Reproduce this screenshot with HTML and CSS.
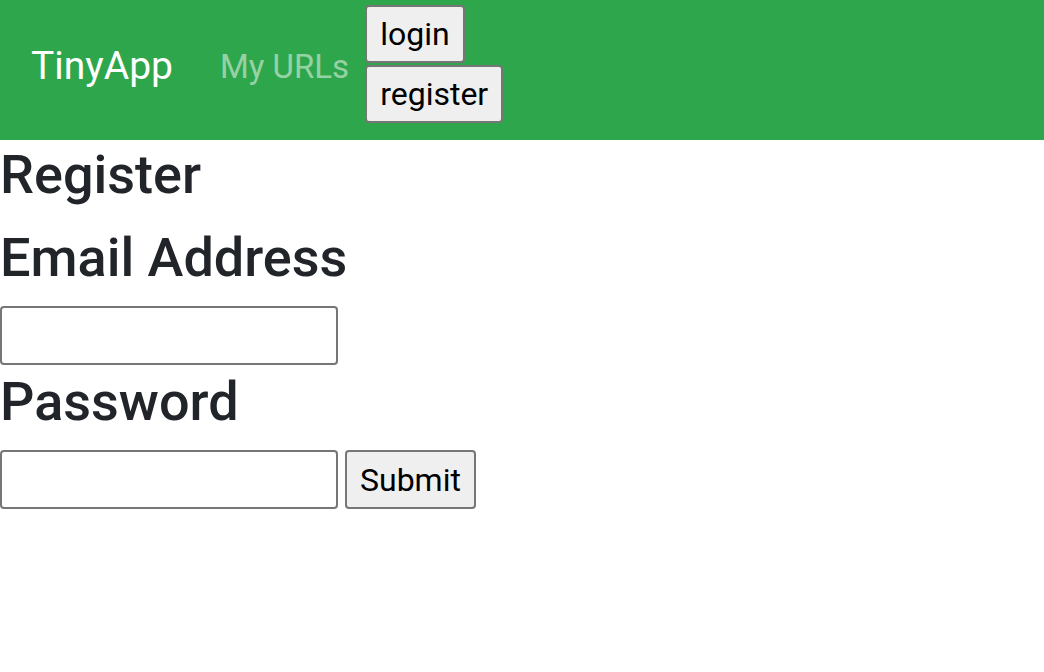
FILE: index.html
```html
<!DOCTYPE html>
<html>
<head>
<meta charset="utf-8">
<title>TinyApp</title>
<link rel="stylesheet" href="styles.css">
</head>
<body>
<nav class="navbar">
  <a class="brand" href="#">TinyApp</a>
  <a class="nav-link" href="#">My URLs</a>
  <div class="auth">
    <button class="btn" type="button">login</button>
    <button class="btn" type="button">register</button>
  </div>
</nav>
<main class="content">
  <h4 class="title">Register</h4>
  <form class="form">
    <h3 class="label label-email">Email Address</h3>
    <input class="field" type="text">
    <h3 class="label label-pw">Password</h3>
    <div class="row">
      <input class="field" type="password">
      <button class="btn submit" type="submit">Submit</button>
    </div>
  </form>
</main>
</body>
</html>
```
FILE: styles.css
```css
html, body {
  margin: 0;
  padding: 0;
  background: #fff;
}
body {
  font-family: Roboto, Inter, "Liberation Sans", sans-serif;
  color: #212529;
}
.navbar {
  height: 140px;
  background: #2ea64b;
  display: flex;
  align-items: flex-start;
  padding-left: 31px;
  box-sizing: border-box;
}
.brand {
  align-self: center;
  color: #fff;
  text-decoration: none;
  font-size: 39px;
  line-height: 1;
  margin-right: 47px;
  margin-top: -8px;
}
.nav-link {
  align-self: center;
  color: rgba(255,255,255,0.5);
  text-decoration: none;
  font-size: 33px;
  line-height: 1;
  margin-right: 16px;
  margin-top: -8px;
}
.auth {
  display: flex;
  flex-direction: column;
  align-items: flex-start;
  gap: 2px;
  margin-top: 5px;
}
.btn {
  font-family: inherit;
  font-size: 32px;
  line-height: 48px;
  height: 58px;
  padding: 0 13px;
  background: #efefef;
  color: #000;
  border: 2px solid #767676;
  border-radius: 4px;
  box-sizing: border-box;
}
.content {
  padding: 0;
}
.title {
  margin: 0;
  font-size: 54px;
  font-weight: 500;
  line-height: 69px;
}
.form {
  margin: 0;
}
.label {
  margin: 0;
  font-size: 54px;
  font-weight: 500;
}
.label-email {
  line-height: 97px;
}
.label-pw {
  line-height: 73px;
  margin-bottom: 12px;
}
.field {
  display: block;
  width: 338px;
  height: 59px;
  box-sizing: border-box;
  border: 2px solid #767676;
  border-radius: 4px;
  background: #fff;
  margin: 0;
  font-size: 30px;
}
.row {
  display: flex;
  align-items: flex-start;
  gap: 7px;
}
.submit {
  height: 59px;
  padding: 0 13px;
}
```
